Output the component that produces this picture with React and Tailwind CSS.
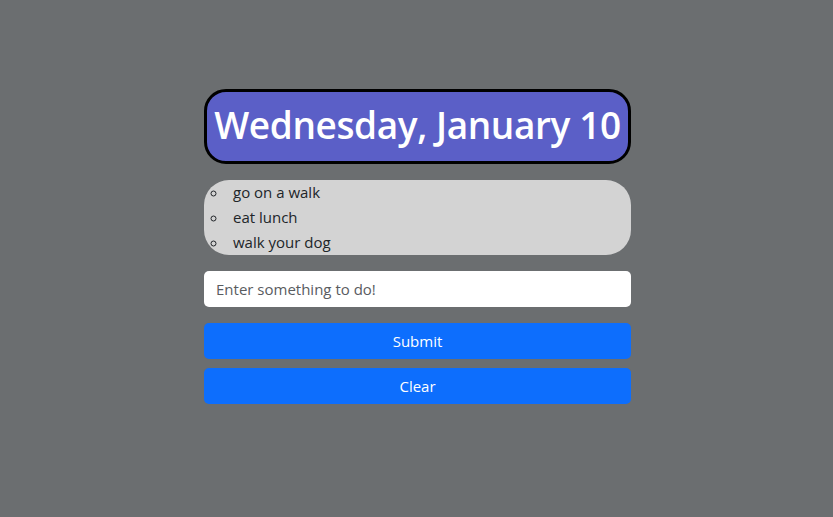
import React from 'react';

export default function App() {
  const [items] = React.useState(['go on a walk', 'eat lunch', 'walk your dog']);

  return (
    <div
      className="w-full min-h-[517px] bg-[#6b6e70] flex justify-center pt-[89px] pl-[2px]"
      style={{ fontFamily: '"Open Sans", "Noto Sans", sans-serif' }}
    >
      <div className="w-[427px] flex flex-col">
        {/* date header */}
        <div className="h-[75px] rounded-[22px] border-[3px] border-black bg-[#5b5fc7] flex items-center justify-center pb-[5px]">
          <h1 className="text-white font-semibold text-[37px] leading-none tracking-[-0.4px] whitespace-nowrap">
            Wednesday, January 10
          </h1>
        </div>

        {/* todo list */}
        <ul className="mt-4 h-[75px] rounded-[25px] bg-[#d3d3d3] list-[circle] list-inside pl-[7px] text-[15px] text-[#212529]">
          {items.map((it) => (
            <li key={it} className="leading-[25px]">
              <span className="ml-[1px]">{it}</span>
            </li>
          ))}
        </ul>

        <input
          className="mt-4 h-[36px] w-full rounded-[5px] bg-white px-3 text-[15px] text-[#212529] placeholder:text-[#595c5f] outline-none"
          placeholder="Enter something to do!"
        />

        <button className="mt-4 h-[36px] w-full rounded-[5px] bg-[#0d6efd] text-white text-[15px]">
          Submit
        </button>
        <button className="mt-[9px] h-[36px] w-full rounded-[5px] bg-[#0d6efd] text-white text-[15px]">
          Clear
        </button>
      </div>
    </div>
  );
}
